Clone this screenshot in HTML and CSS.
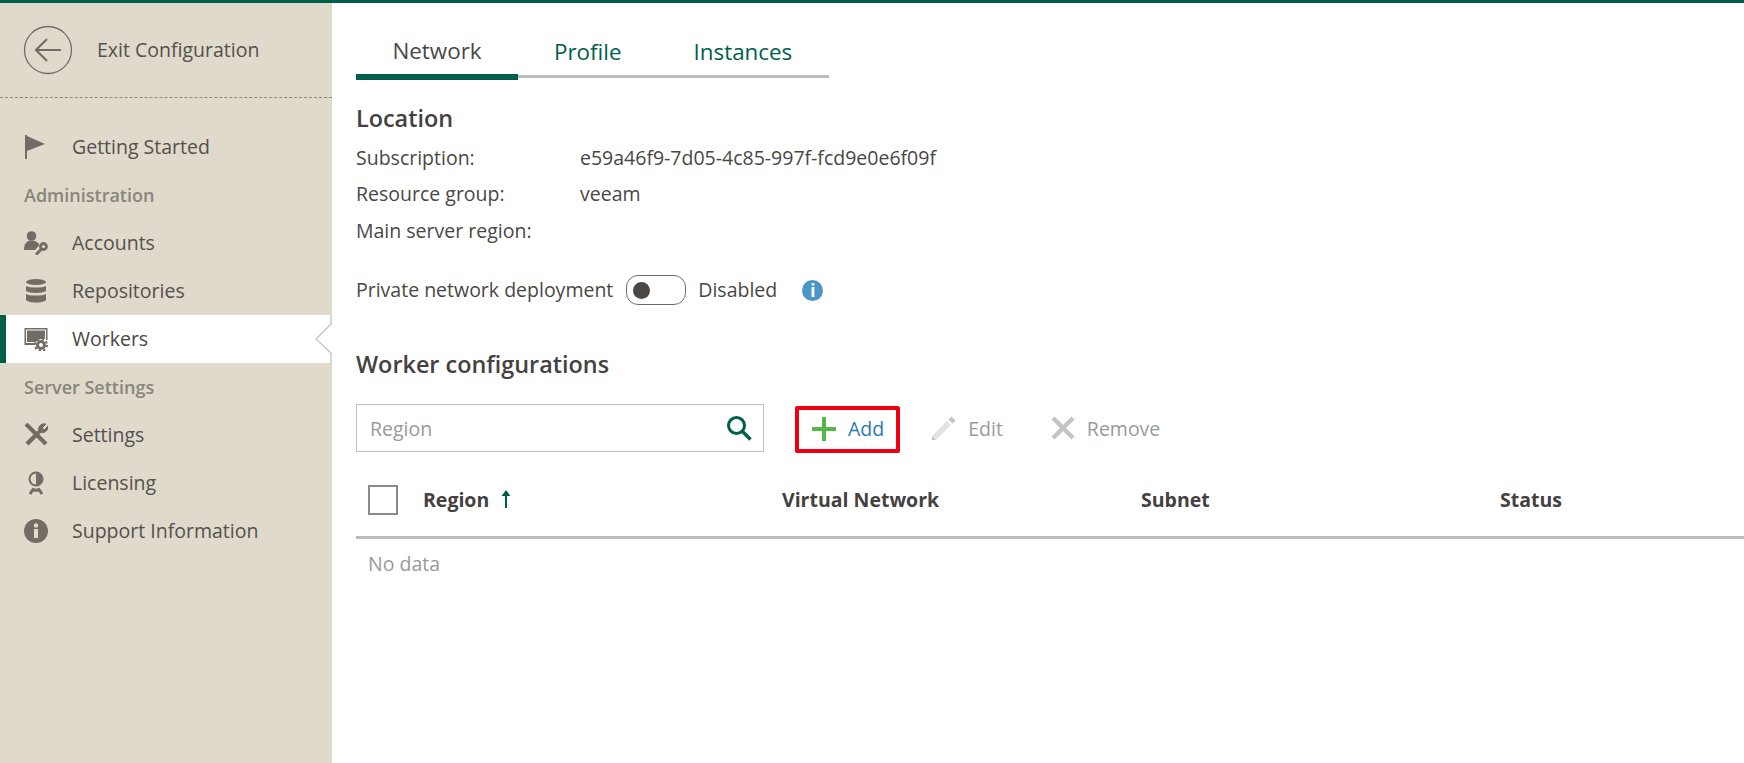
FILE: index.html
```html
<!DOCTYPE html>
<html lang="en">
<head>
    <meta charset="UTF-8">
    <title>Worker configurations</title>
    <link rel="stylesheet" href="styles.css">
</head>
<body>
    <div class="app">
        <aside class="sidebar">
            <div class="exit">
                <svg class="exit-icon" width="50" height="50" viewBox="0 0 50 50">
                    <circle cx="25" cy="25" r="23.5" fill="none" stroke="#736c64" stroke-width="1.3"/>
                    <path d="M13 25H38M24 14L13 25L24 36" fill="none" stroke="#736c64" stroke-width="2.2"/>
                </svg>
                <span class="exit-label">Exit Configuration</span>
            </div>
            <nav class="nav">
                <a class="nav-item">
                    <svg class="nav-icon" width="24" height="24" viewBox="0 0 24 24"><path d="M1 0H3V24H1ZM3 1L21 9L3 16Z" fill="#736c64"/></svg>
                    Getting Started
                </a>
                <div class="nav-title">Administration</div>
                <a class="nav-item">
                    <svg class="nav-icon" width="24" height="24" viewBox="0 0 24 24">
                        <circle cx="7.500" cy="5" r="4.800" fill="#736c64"/>
                        <path d="M0 19C0 12 3 9.500 7.500 9.500C11 9.500 14 11 15.500 14L11 19Z" fill="#736c64"/>
                        <circle cx="19.500" cy="15.500" r="3" fill="none" stroke="#736c64" stroke-width="2.800"/>
                        <path d="M17.500 18L12 23.500" stroke="#736c64" stroke-width="3"/>
                    </svg>
                    Accounts
                </a>
                <a class="nav-item">
                    <svg class="nav-icon" width="24" height="24" viewBox="0 0 24 24" fill="#736c64">
                        <ellipse cx="12" cy="3" rx="10" ry="3"/>
                        <path d="M2 7C5 9 19 9 22 7V12C19 14.500 5 14.500 2 12Z"/>
                        <path d="M2 15C5 17 19 17 22 15V21C19 24.500 5 24.500 2 21Z"/>
                    </svg>
                    Repositories
                </a>
                <a class="nav-item active">
                    <svg class="nav-icon" width="24" height="24" viewBox="0 0 24 24">
                        <path d="M0.500 1H23.500V13H22V2.500H2V16H11V18H0.500Z" fill="#736c64"/>
                        <path d="M3 3.500H21V12H15L12 15H3Z" fill="#736c64"/>
                        <circle cx="17" cy="18" r="3.500" fill="none" stroke="#736c64" stroke-width="3"/>
                        <circle cx="17" cy="18" r="6" fill="none" stroke="#736c64" stroke-width="2" stroke-dasharray="2.300 2.400"/>
                    </svg>
                    Workers
                    <svg class="notch" width="17" height="48" viewBox="0 0 17 48">
                        <path d="M16 0V9L1 24L16 38V48" fill="#fff" stroke="#c9c7c1" stroke-width="1.500"/>
                    </svg>
                </a>
                <div class="nav-title">Server Settings</div>
                <a class="nav-item">
                    <svg class="nav-icon" width="24" height="24" viewBox="0 0 24 24" fill="none" stroke="#736c64">
                        <path d="M2 1L22 21" stroke-width="4"/>
                        <path d="M3 21L15 9" stroke-width="4.500"/>
                        <path d="M15 9C13 4 17 0 22 1L18 5L20 7L24 3C24.500 8 20 11 15 9Z" fill="#736c64" stroke-width="1"/>
                    </svg>
                    Settings
                </a>
                <a class="nav-item">
                    <svg class="nav-icon" width="24" height="24" viewBox="0 0 24 24">
                        <circle cx="12" cy="8" r="6.500" fill="none" stroke="#736c64" stroke-width="2"/>
                        <path d="M12 2A6 6 0 0 1 12 14Z" fill="#736c64"/>
                        <path d="M6 23L9 18.500L12 19.500L15 18.500L18 23" fill="none" stroke="#736c64" stroke-width="3"/>
                    </svg>
                    Licensing
                </a>
                <a class="nav-item">
                    <svg class="nav-icon" width="24" height="24" viewBox="0 0 24 24">
                        <circle cx="12" cy="12" r="12" fill="#736c64"/>
                        <rect x="10" y="10" width="4" height="9" fill="#dfdacc"/>
                        <circle cx="12" cy="6.500" r="2.200" fill="#dfdacc"/>
                    </svg>
                    Support Information
                </a>
            </nav>
        </aside>

        <main class="content">
            <div class="tabs">
                <a class="tab active">Network</a>
                <a class="tab">Profile</a>
                <a class="tab">Instances</a>
            </div>

            <h2 class="location-title">Location</h2>
            <dl class="details">
                <dt>Subscription:</dt><dd>e59a46f9-7d05-4c85-997f-fcd9e0e6f09f</dd>
                <dt>Resource group:</dt><dd>veeam</dd>
                <dt>Main server region:</dt><dd></dd>
            </dl>

            <div class="private-row">
                <span class="row-text">Private network deployment</span>
                <span class="toggle"><span class="knob"></span></span>
                <span class="row-text">Disabled</span>
                <span class="info">i</span>
            </div>

            <h2 class="workers-title">Worker configurations</h2>

            <div class="toolbar">
                <div class="search">
                    <span class="placeholder">Region</span>
                    <svg width="26" height="26" viewBox="0 0 26 26" fill="none" stroke="#005f4b">
                        <circle cx="10.500" cy="10.500" r="8" stroke-width="3"/>
                        <path d="M16 16L24.500 24.500" stroke-width="3.500"/>
                    </svg>
                </div>
                <a class="btn btn-add">
                    <svg width="24" height="24" viewBox="0 0 24 24"><path d="M10 0H14V10H24V14H14V24H10V14H0V10H10Z" fill="#55b748"/></svg>
                    Add
                </a>
                <a class="btn btn-off">
                    <svg width="24" height="24" viewBox="0 0 24 24">
                        <path d="M0 24V20L15 5L19 9L4 24Z" fill="#e3e3e3"/>
                        <path d="M16.500 3.500L19.500 0.500L23.500 4.500L20.500 7.500Z" fill="#c4c4c4"/>
                        <path d="M0 24V20.500L3.500 24Z" fill="#bbb"/>
                    </svg>
                    Edit
                </a>
                <a class="btn btn-off">
                    <svg width="24" height="24" viewBox="0 0 24 24"><path d="M2 2L22 22M22 2L2 22" stroke="#c4c4c4" stroke-width="4.500"/></svg>
                    Remove
                </a>
            </div>

            <div class="grid-head">
                <div class="col-region">
                    <span class="checkbox"></span>
                    <span>Region</span>
                    <svg class="sort" width="10" height="18" viewBox="0 0 10 18"><path d="M5 0L9.500 6H6V18H4V6H0.500Z" fill="#005f4b"/></svg>
                </div>
                <div>Virtual Network</div>
                <div>Subnet</div>
                <div>Status</div>
            </div>
            <div class="no-data">No data</div>
        </main>
    </div>
</body>
</html>
```

FILE: styles.css
```css
html, body {
    height: 100%;
    margin: 0;
}
body {
    background-color: #FFFFFF;
    border-top: 3px solid #005f4b;
    box-sizing: border-box;
    overflow: hidden;
    font-family: "Open Sans", Arial, sans-serif;
    font-size: 19.5px;
    color: #4a4745;
}
.app {
    display: flex;
    height: 100%;
}

/* sidebar */
.sidebar {
    width: 332px;
    flex-shrink: 0;
    background-color: #dfdacc;
}
.exit {
    display: flex;
    align-items: center;
    gap: 24px;
    height: 95px;
    padding-left: 23px;
    border-bottom: 1px dashed #8f8a80;
    box-sizing: border-box;
    color: #55504c;
}
.exit-icon {
    flex-shrink: 0;
}
.exit-label {
    margin-bottom: 2px;
}
.nav {
    padding-top: 25px;
}
.nav-item {
    position: relative;
    display: flex;
    align-items: center;
    gap: 24px;
    height: 48px;
    box-sizing: border-box;
    padding: 0 0 2px 24px;
    color: #55504c;
}
.nav-item.active {
    background-color: #FFFFFF;
    box-shadow: inset 6px 0 0 #005f4b;
    color: #4a4745;
}
.nav-icon {
    flex-shrink: 0;
    margin-top: 2px;
}
.notch {
    position: absolute;
    right: 0;
    top: 0;
}
.nav-title {
    display: flex;
    align-items: center;
    height: 48px;
    padding-left: 24px;
    font-size: 18px;
    font-weight: 600;
    color: #8a857a;
}

/* main area */
.content {
    flex: 1;
    min-width: 0;
    padding: 0 0 0 24px;
}
.tabs {
    display: flex;
    width: 473px;
    height: 75px;
    box-sizing: border-box;
    border-bottom: 3px solid #bdbdbd;
}
.tab {
    display: flex;
    align-items: center;
    justify-content: center;
    height: 72px;
    padding: 24px 36px 0;
    box-sizing: border-box;
    font-size: 22.4px;
    color: #005f4b;
}
.tab.active {
    flex-shrink: 0;
    width: 162px;
    height: 77px;
    padding: 24px 0 0;
    border-bottom: 6px solid #005f4b;
    color: #4a4745;
}
.location-title {
    margin: 22px 0 0;
    height: 36px;
    line-height: 36px;
    font-size: 23.4px;
    font-weight: 600;
    color: #444140;
}
.details {
    display: grid;
    grid-template-columns: 224px 1fr;
    grid-auto-rows: 36.500px;
    align-items: center;
    margin: 3px 0 0;
    height: 110px;
}
.details dt,
.details dd {
    margin: 0;
}
.private-row {
    display: flex;
    align-items: center;
    height: 30px;
    margin-top: 26px;
}
.row-text {
    margin-bottom: 2px;
}
.toggle {
    display: flex;
    align-items: center;
    width: 60px;
    height: 30px;
    box-sizing: border-box;
    margin: 0 12px 0 13px;
    padding-left: 6px;
    border: 1px solid #736c64;
    border-radius: 12px;
}
.knob {
    width: 17px;
    height: 17px;
    border-radius: 50%;
    background-color: #4a4745;
}
.info {
    width: 21px;
    height: 21px;
    margin-left: 25px;
    border-radius: 50%;
    background-color: #4b96c8;
    color: #FFFFFF;
    font-size: 17px;
    font-weight: 700;
    line-height: 21px;
    text-align: center;
}
.workers-title {
    margin: 41px 0 0;
    height: 37px;
    line-height: 36px;
    font-size: 23.4px;
    font-weight: 600;
    color: #444140;
}
.toolbar {
    display: flex;
    align-items: center;
    height: 48px;
    margin-top: 21px;
}
.search {
    display: flex;
    align-items: center;
    justify-content: space-between;
    width: 408px;
    height: 48px;
    box-sizing: border-box;
    padding: 0 11px 0 13px;
    border: 1px solid #bdbdbd;
}
.placeholder {
    color: #9a9a9a;
}
.btn {
    display: flex;
    align-items: center;
    gap: 12px;
}
.btn-add {
    height: 47px;
    box-sizing: border-box;
    margin: 3px 0 0 31px;
    padding: 0 12px 2px 13px;
    border: 4px solid #ee0010;
    border-radius: 2px;
    color: #2a7ab0;
}
.btn-off {
    margin-left: 32px;
    color: #9a9a9a;
}
.btn-off + .btn-off {
    margin-left: 48px;
}
.grid-head {
    display: grid;
    grid-template-columns: 426px 359px 359px 1fr;
    align-items: center;
    height: 87px;
    box-sizing: border-box;
    padding-top: 12px;
    border-bottom: 3px solid #bdbdbd;
    font-weight: 700;
    color: #444140;
}
.grid-head > div {
    padding-bottom: 2px;
}
.col-region {
    display: flex;
    align-items: center;
    padding-left: 12px;
}
.checkbox {
    width: 30px;
    height: 30px;
    box-sizing: border-box;
    margin: 2px 25px 0 0;
    border: 2px solid #8a8a8a;
    background-color: #FFFFFF;
}
.sort {
    margin-left: 12px;
}
.no-data {
    padding: 11px 0 0 12px;
    color: #9a9a9a;
}
```
